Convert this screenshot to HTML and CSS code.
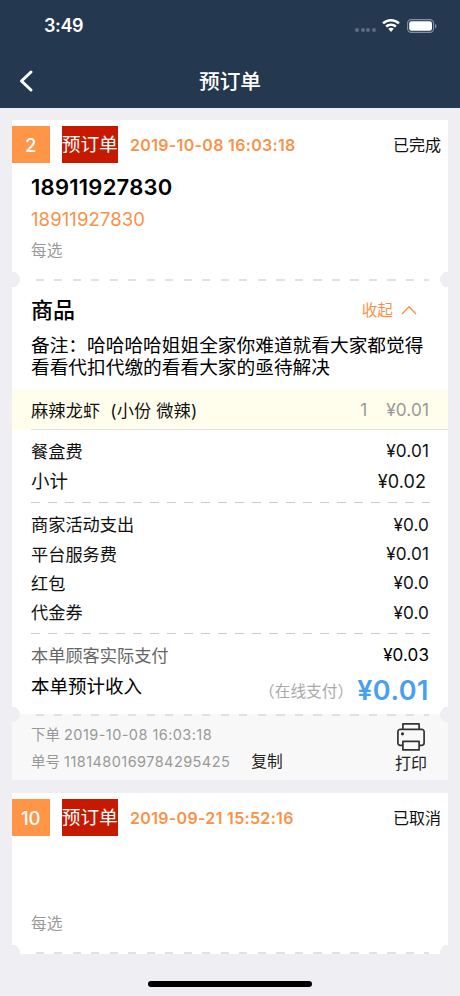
FILE: index.html
```html
<!DOCTYPE html>
<html lang="zh-CN">
<head>
<meta charset="utf-8">
<meta name="viewport" content="width=device-width, initial-scale=1">
<title>预订单</title>
<link rel="stylesheet" href="styles.css">
</head>
<body>
<div class="screen">
  <header class="top">
    <div class="status">
      <span class="clock">3:49</span>
      <div class="status-icons">
        <span class="cell"><i></i><i></i><i></i><i></i></span>
        <svg class="wifi" width="18" height="14" viewBox="0 0 18 14"><path d="M9 0C5.600 0 2.500 1.300.200 3.500l1.700 1.800C3.800 3.600 6.300 2.500 9 2.500s5.200 1.100 7.100 2.800l1.700-1.800C15.500 1.300 12.400 0 9 0z"/><path d="M9 4.500c-2.200 0-4.200.8-5.700 2.200L5 8.500c1-1 2.400-1.600 4-1.600s3 .6 4 1.600l1.700-1.800C13.200 5.300 11.200 4.500 9 4.500z"/><path d="M9 8.800c-1.100 0-2 .4-2.700 1L9 13l2.700-3.200c-.7-.6-1.600-1-2.700-1z"/></svg>
        <svg class="battery" width="30" height="14" viewBox="0 0 30 14"><rect x=".6" y=".6" width="26" height="12.800" rx="3.600" fill="none" stroke="#8290a0" stroke-width="1.100"/><rect x="2.200" y="2.200" width="22.800" height="9.600" rx="2.200" fill="#fff"/><path d="M28 4.700c1.900.8 1.900 3.800 0 4.600z" fill="#8290a0"/></svg>
      </div>
    </div>
    <nav class="nav">
      <svg class="back" width="16" height="24" viewBox="0 0 16 24"><path d="M13 3 3.500 12 13 21" fill="none" stroke="#fff" stroke-width="3" stroke-linecap="round" stroke-linejoin="round"/></svg>
      <h1>预订单</h1>
      <span class="back"></span>
    </nav>
  </header>

  <main>
    <article class="card">
      <div class="head">
        <span class="num">2</span><span class="tag">预订单</span>
        <time>2019-10-08 16:03:18</time><span class="state">已完成</span>
      </div>
      <div class="customer">
        <div class="name">18911927830</div>
        <div class="phone">18911927830</div>
        <div class="addr">每选</div>
      </div>
      <div class="tear"><span class="perf"></span></div>
      <div class="goods">
        <h2>商品</h2>
        <div class="fold">收起<svg width="16" height="10" viewBox="0 0 16 10"><path d="M1 9 8 1.800 15 9" fill="none" stroke="#fb9147" stroke-width="1.300"/></svg></div>
      </div>
      <p class="remark">备注：哈哈哈哈姐姐全家你难道就看大家都觉得<br>看看代扣代缴的看看大家的亟待解决</p>
      <div class="item"><span class="dish">麻辣龙虾&nbsp; (小份 微辣)</span><span class="qty">1</span><span class="price">¥0.01</span></div>
      <section class="box">
        <div class="row"><span>餐盒费</span><span class="price">¥0.01</span></div>
        <div class="row big"><span>小计</span><span class="price">¥0.02</span></div>
      </section>
      <div class="dash"></div>
      <section class="fees">
        <div class="row"><span>商家活动支出</span><span class="price">¥0.0</span></div>
        <div class="row"><span>平台服务费</span><span class="price">¥0.01</span></div>
        <div class="row"><span>红包</span><span class="price">¥0.0</span></div>
        <div class="row"><span>代金券</span><span class="price">¥0.0</span></div>
      </section>
      <div class="dash"></div>
      <section class="total">
        <div class="row paid"><span>本单顾客实际支付</span><span class="price">¥0.03</span></div>
        <div class="row income"><span>本单预计收入</span><span class="method">（在线支付）</span><span class="sum">¥0.01</span></div>
      </section>
      <div class="tear foot-tear"><span class="perf"></span></div>
      <footer class="foot">
        <div class="meta">
          <div>下单 <span class="placed">2019-10-08 16:03:18</span></div>
          <div>单号 <span class="order-no">1181480169784295425</span><button class="copy">复制</button></div>
        </div>
        <button class="print">
          <svg width="28" height="28" viewBox="0 0 28 28" fill="none" stroke="#333" stroke-width="1.700" stroke-linejoin="round"><path d="M5.900 6.300V.9h16.200v5.400M5.900 22.300H3.100a2.200 2.200 0 0 1-2.200-2.200V8.700a2.400 2.400 0 0 1 2.400-2.400h21.400a2.400 2.400 0 0 1 2.400 2.400v11.400a2.200 2.200 0 0 1-2.200 2.200h-2.800"/><path d="M5.900 18.300h16.200v8.600H5.900z"/><circle cx="5.500" cy="10.800" r="1.600" fill="#333" stroke="none"/></svg>
          <span>打印</span>
        </button>
      </footer>
    </article>

    <article class="card clipped">
      <div class="head">
        <span class="num">10</span><span class="tag">预订单</span>
        <time>2019-09-21 15:52:16</time><span class="state">已取消</span>
      </div>
      <div class="customer">
        <div class="name"></div>
        <div class="phone"></div>
        <div class="addr">每选</div>
      </div>
      <div class="tear"><span class="perf"></span></div>
    </article>
  </main>
  <div class="home"></div>
</div>
</body>
</html>
```
FILE: styles.css
```css
* { box-sizing: border-box; }
body { margin: 0; background: #eeeef3; color: #111; font-family: Inter, "Noto Sans CJK SC", sans-serif; font-size: 17.2px; }
h1, h2, p { margin: 0; }
button { padding: 0; border: 0; background: none; color: #222; font: inherit; }
.screen { display: flex; flex-direction: column; width: 460px; height: 996px; overflow: hidden; }
.top { height: 108px; background: #24384f; color: #fff; }
.status { display: flex; align-items: center; justify-content: space-between; height: 51px; padding: 0 23px 0 44px; }
.clock { font-size: 18px; font-weight: 600; letter-spacing: -.4px; }
.status-icons { display: flex; align-items: center; height: 14px; }
.cell { display: flex; gap: 1.700px; margin: 9px 6px 0 0; }
.cell i { width: 4px; height: 4px; border-radius: 50%; background: #5d6d7f; }
.wifi { margin-right: 7px; fill: #fff; }
.nav { display: flex; align-items: center; justify-content: space-between; height: 60px; padding: 0 18px; }
.back { width: 16px; }
h1 { padding-bottom: 3px; font-size: 20.7px; font-weight: 500; }

main { padding: 12px 12px 0; }
.card { margin-bottom: 13px; padding-top: 6px; background: #fff; }
.head { display: flex; align-items: center; height: 37px; }
.num { width: 37.500px; height: 37px; margin-right: 12px; background: #ff9647; color: #fff; font-size: 18.500px; font-weight: 500; line-height: 38px; text-align: center; }
.tag { width: 56.500px; height: 37px; margin-right: 12px; background: #c61a00; color: #fff; font-size: 18.700px; line-height: 38px; text-align: center; white-space: nowrap; }
time { color: #fb9147; font-size: 16px; font-weight: 600; letter-spacing: .32px; white-space: nowrap; }
.state { margin-left: auto; padding: 0 7px 1px 0; font-size: 16px; }
.customer { height: 109px; padding: 8px 19px 0; }
.name { height: 32px; color: #000; font-size: 22px; font-weight: 600; letter-spacing: .25px; line-height: 32px; }
.phone { height: 32px; color: #fb9147; font-size: 18.500px; letter-spacing: .1px; line-height: 32px; }
.addr { height: 30px; color: #999; font-size: 15.700px; line-height: 31px; }
.tear { display: flex; align-items: center; height: 15px; background: radial-gradient(circle at 0 50%, #eeeef3 7.700px, transparent 8.200px), radial-gradient(circle at 100% 50%, #eeeef3 7.700px, transparent 8.200px); }
.perf { flex: 1; height: 2px; margin: 0 19px 0 24px; background: repeating-linear-gradient(90deg, #e1e1e4 0 8px, transparent 8px 18.500px); }
.goods { display: flex; align-items: center; justify-content: space-between; height: 46px; padding: 0 31px 1px 19px; }
h2 { padding-bottom: 3px; color: #000; font-size: 22px; font-weight: 500; }
.fold { display: flex; align-items: center; gap: 8px; color: #fb9147; font-size: 15.700px; }
.remark { height: 55.500px; padding: 2px 0 0 19px; color: #000; font-size: 18.720px; line-height: 22px; white-space: nowrap; }
.item { display: flex; align-items: center; height: 41px; padding: 0 19px; background: linear-gradient(#e3e3dd, #e3e3dd) 19px 100% / 100% 1px no-repeat #fffeec; }
.dish { letter-spacing: .14px; }
.qty { margin-left: auto; margin-right: 19px; color: #999; }
.price { letter-spacing: .1px; }
.item .price { color: #999; }
.box { height: 72.500px; padding: 6px 19px 0; }
.row { display: flex; align-items: center; justify-content: space-between; height: 29.400px; white-space: nowrap; }
.row .price { padding-top: 1px; }
.big { height: 31px; padding-right: 3px; font-size: 18.500px; }
.big .price { padding-top: 2px; font-size: 18px; }
.dash { height: 1px; margin: 0 18px 0 19px; background: repeating-linear-gradient(90deg, #ccc 0 9px, transparent 9px 17px); }
.fees { height: 130px; padding: 6px 19px 0; }
.total { height: 73px; padding: 6px 19px 0; }
.paid { color: #666; }
.paid .price { color: #000; font-size: 17px; }
.income { height: 32px; padding-bottom: 1px; color: #000; font-size: 18.500px; }
.method { margin: 12px 4px 0 auto; color: #aaa; font-size: 15.700px; }
.sum { margin-top: 11px; color: #4a9ff0; font-size: 27px; font-weight: 600; letter-spacing: .5px; }
.foot-tear { background-color: #f8f8f8; background-image: radial-gradient(circle at 0 50%, #eeeef3 7.700px, transparent 8.200px), radial-gradient(circle at 100% 50%, #eeeef3 7.700px, transparent 8.200px), linear-gradient(#fff 50%, transparent 50%); }
.foot { display: flex; justify-content: space-between; height: 58px; padding: 1px 20px 0 19px; background: #f8f8f8; }
.meta { margin-top: -2px; color: #999; font-size: 14.500px; line-height: 27px; white-space: nowrap; }
.placed, .order-no { letter-spacing: .44px; }
.copy { margin-left: 21px; font-size: 15.700px; letter-spacing: 0; }
.print { display: flex; flex-direction: column; align-items: center; width: 34px; font-size: 16px; line-height: 25px; }
.clipped { height: 161px; overflow: hidden; }
.home { flex: none; width: 164px; height: 6px; margin: 14px auto 0; border-radius: 3px; background: #000; }
```
